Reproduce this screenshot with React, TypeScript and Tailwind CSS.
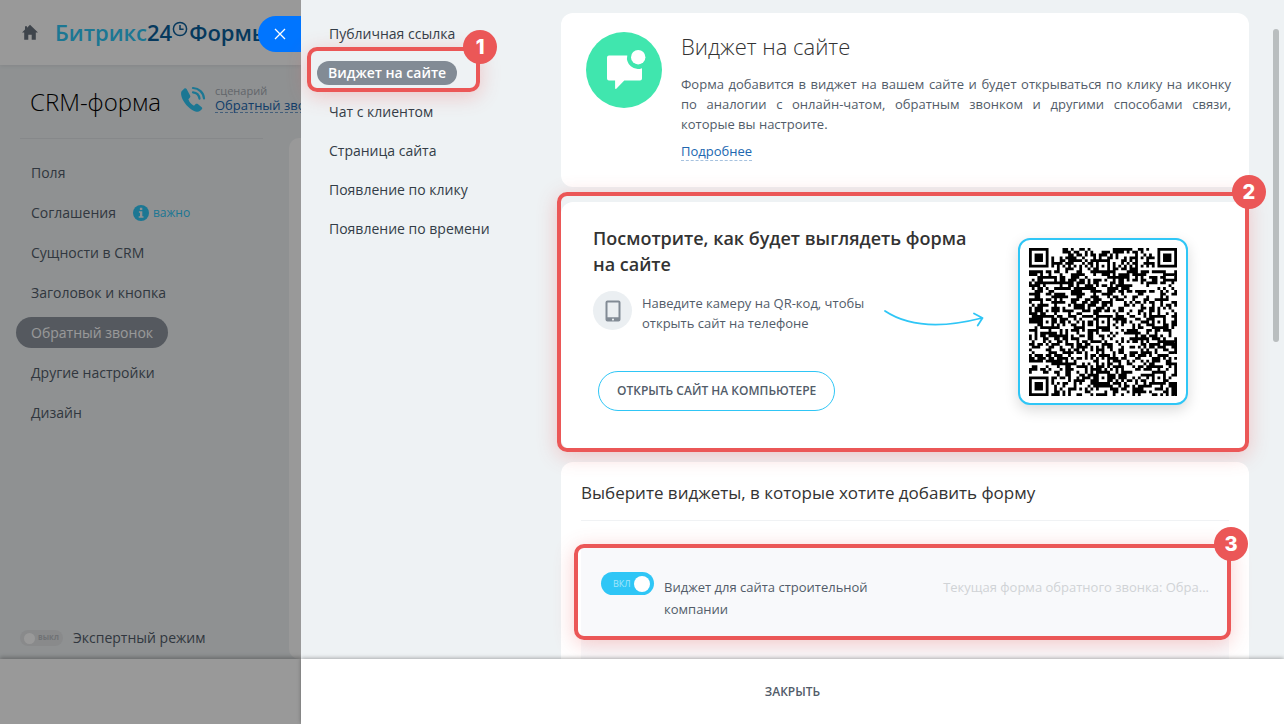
import * as React from 'react';

const FORM_MENU = ['Поля', 'Соглашения', 'Сущности в CRM', 'Заголовок и кнопка', 'Обратный звонок', 'Другие настройки', 'Дизайн']
const PUBLISH_MENU = ['Публичная ссылка', 'Виджет на сайте', 'Чат с клиентом', 'Страница сайта', 'Появление по клику', 'Появление по времени']

const QR_SIZE = 53

function isFrame (dx: number, dy: number, rings: number[]) {
  return rings.includes(Math.max(Math.abs(dx), Math.abs(dy)))
}

// dark modules of the code as one svg path
function qrPath () {
  const finders = [[3, 3], [QR_SIZE - 4, 3], [3, QR_SIZE - 4]]
  const marks = [[26, 6], [6, 26], [26, 26], [46, 26], [26, 46], [46, 46]]
  let seed = 20240
  let path = ''
  for (let y = 0; y < QR_SIZE; y++) {
    for (let x = 0; x < QR_SIZE; x++) {
      seed = (seed * 1103515245 + 12345) % 2147483648
      let dark = (seed >> 16) % 100 < 51
      if (x === 6 || y === 6) dark = (x + y) % 2 === 0
      for (const [cx, cy] of marks) {
        if (Math.abs(x - cx) <= 2 && Math.abs(y - cy) <= 2) dark = isFrame(x - cx, y - cy, [0, 2])
      }
      for (const [cx, cy] of finders) {
        if (Math.abs(x - cx) <= 4 && Math.abs(y - cy) <= 4) dark = isFrame(x - cx, y - cy, [0, 1, 3])
      }
      if (dark) path += `M${x} ${y}h1v1h-1z`
    }
  }
  return path
}

const QR_PATH = qrPath()

function Highlight ({ num, className }: { num: number, className: string }) {
  return (
    <div className={`pointer-events-none absolute z-10 rounded-[10px] border-4 border-[#eb5757] shadow-[0_4px_20px_rgba(235,87,87,0.3)] ${className}`}>
      <span className="absolute -top-[21px] -right-[21px] flex h-[34px] w-[34px] items-center justify-center rounded-full bg-[#eb5757] font-[Inter,sans-serif] text-xl font-extrabold text-white">{num}</span>
    </div>
  )
}

function FormSidebar () {
  return (
    <aside className="relative flex w-[301px] shrink-0 flex-col overflow-hidden bg-[#eef2f4]">
      <header className="flex h-[65px] shrink-0 items-center bg-white pl-[21px] shadow-[0_1px_4px_rgba(0,0,0,0.08)]">
        <svg viewBox="0 0 18 17" className="h-[17px] w-[18px] shrink-0" fill="#6a737f">
          <path d="M9 0.8 17 8.6h-2.2v7.2h-4.1v-5.1H7.3v5.1H3.2V8.6H1L4 5.6V2.2h2v1.5z" />
        </svg>
        <div className="ml-4 flex items-center text-[22px] font-semibold whitespace-nowrap text-[#0b5f9c]">
          <span className="text-[#2fc6f6]">Битрикс</span>24
          <svg viewBox="0 0 16 16" className="mb-2 h-4 w-4" fill="none" stroke="#0b5f9c" strokeWidth="1.5">
            <circle cx="8" cy="8" r="6.6" />
            <path d="M8 4v4.3h3.6" />
          </svg>
          <span className="ml-px">Формы</span>
        </div>
      </header>

      <div className="flex h-[73px] shrink-0 items-center pl-[30px] whitespace-nowrap">
        <h1 className="w-[150px] shrink-0 text-2xl font-light text-black">CRM-форма</h1>
        <svg viewBox="0 0 26 28" className="mb-1 h-7 w-[26px] shrink-0" fill="#2fc6f6">
          <path d="M4.4 2.6 1.6 5.2C.4 7 1.200 12 5 17.200c4 5.300 8.900 8.500 12.800 8.600 1.500 0 2.600-1 4-2.500.6-.7.6-1.300-.1-2l-3.900-3.200c-.7-.6-1.500-.6-2.100 0l-1.700 1.700c-2.700-1.300-4.900-4-5.600-6.500l1.600-1.800c.5-.7.5-1.300.1-2L6.600 3C6 2.100 5.200 1.900 4.400 2.600z" />
          <path d="M13 2c6 .3 10.500 4.500 11 10.500M13 6.400c3.600.3 6 2.700 6.500 6.300" fill="none" stroke="#2fc6f6" strokeWidth="2.200" strokeLinecap="round" />
        </svg>
        <div className="mb-[6px] ml-[9px] flex flex-col items-start">
          <span className="text-[11px] leading-[14px] text-[#a3a9b1]">сценарий</span>
          <a href="#scenario" className="border-b border-dashed border-[#2067b0]/60 text-[13px] leading-[14px] text-[#2067b0]">Обратный звонок</a>
        </div>
      </div>

      <div className="flex flex-1">
        <div className="flex flex-1 flex-col">
          <hr className="ml-5 w-[243px] border-[#dfe3e6]" />
          <nav className="mt-[18px] flex flex-col items-start gap-[9px] pl-4">
            {FORM_MENU.map((item) => (
              <div key={item} className="flex items-center">
                <a
                  href="#form"
                  className={item === 'Обратный звонок'
                    ? 'flex h-[31px] items-center rounded-full bg-[#8e959f] px-[15px] text-sm text-white'
                    : 'flex h-[31px] items-center px-[15px] text-sm text-[#525c69]'}
                >{item}</a>
                {item === 'Соглашения' && (
                  <span className="ml-[2px] flex items-center gap-1 text-xs text-[#2fc6f6]">
                    <svg viewBox="0 0 16 16" className="h-4 w-4">
                      <circle cx="8" cy="8" r="8" fill="#2fc6f6" />
                      <path d="M6.900 2.800h2.400v2.200H6.900zM5.900 6.300h3.400v5h1.200v1.500H5.700v-1.500h1.300V7.800H5.900z" fill="#eef2f4" />
                    </svg>
                    важно
                  </span>
                )}
              </div>
            ))}
          </nav>
          <label className="mt-auto mb-[11px] flex items-center gap-[10px] pl-5 text-sm text-[#525c69]">
            <input type="checkbox" className="sr-only" />
            <span className="flex h-4 w-[43px] items-center gap-[3px] rounded-full bg-[#e4e6e8] pl-1 text-[7px] font-bold text-[#b9bdc2]">
              <span className="h-[11px] w-[11px] rounded-full bg-white" />
              ВЫКЛ
            </span>
            Экспертный режим
          </label>
        </div>
        <div className="w-3 rounded-l-[10px] bg-white" />
      </div>

      <div className="h-[65px] shrink-0 bg-white shadow-[0_-2px_4px_rgba(0,0,0,0.25)]" />

      <div className="absolute inset-0 bg-black/40" />
      <button type="button" aria-label="Закрыть панель" className="absolute top-4 right-0 flex h-9 w-[43px] items-center justify-center rounded-l-full bg-[#0075ff]">
        <svg viewBox="0 0 12 12" className="h-3 w-3" stroke="white" strokeWidth="1.300">
          <path d="M1 1l10 10M11 1 1 11" />
        </svg>
      </button>
    </aside>
  )
}

function PublishMenu () {
  return (
    <nav className="flex w-[260px] shrink-0 flex-col items-start gap-[15px] pt-[22px] pl-4">
      {PUBLISH_MENU.map((item) => item === 'Виджет на сайте'
        ? (
          <div key={item} className="relative">
            <a href="#publish" className="flex h-6 items-center rounded-full bg-[#828b95] px-[11px] text-sm font-semibold text-white">{item}</a>
            <Highlight num={1} className="-top-[14px] -right-[23px] -bottom-[7px] -left-[10px]" />
          </div>
          )
        : <a key={item} href="#publish" className="flex h-6 items-center px-3 text-sm text-[#333d47]">{item}</a>
      )}
    </nav>
  )
}

function AboutCard () {
  return (
    <section className="flex gap-[19px] rounded-xl bg-white pt-[19px] pr-[18px] pb-[25px] pl-[25px]">
      <svg viewBox="0 0 76 76" className="h-[76px] w-[76px] shrink-0">
        <circle cx="38" cy="38" r="38" fill="#40e6ae" />
        <path d="M23 23.500h18.300A11 11 0 0 0 56 36.200V46.500a2 2 0 0 1-2 2H38.300l-8 8.200c-.6.500-1.200.3-1.200-.6v-7.600H23a2 2 0 0 1-2-2V25.500a2 2 0 0 1 2-2z" fill="white" />
        <circle cx="52.200" cy="25.200" r="7.200" fill="white" />
      </svg>
      <div>
        <h2 className="text-[22px] leading-7 font-light text-[#333]">Виджет на сайте</h2>
        <p className="mt-[14px] text-justify text-[13px] leading-5 text-[#525c69]">Форма добавится в виджет на вашем сайте и будет открываться по клику на иконку по аналогии с онлайн-чатом, обратным звонком и другими способами связи, которые вы настроите.</p>
        <a href="#more" className="mt-[9px] inline-block border-b border-dashed border-[#a6c2df] text-[13px] leading-[17px] text-[#2067b0]">Подробнее</a>
      </div>
    </section>
  )
}

function PreviewCard () {
  return (
    <section className="relative mt-[15px] flex rounded-xl bg-white pt-[23px] pr-[61px] pb-[39px] pl-8">
      <Highlight num={2} className="-top-[10px] right-0 -bottom-[2px] -left-1" />
      <div className="w-[390px]">
        <h2 className="text-lg leading-[26px] font-semibold text-[#333]">Посмотрите, как будет выглядеть форма на сайте</h2>
        <div className="mt-[14px] flex items-start gap-[10px]">
          <span className="flex h-[39px] w-[39px] shrink-0 items-center justify-center rounded-full bg-[#ebeff2]">
            <svg viewBox="0 0 16 22" className="h-[22px] w-4">
              <path fillRule="evenodd" d="M2.500.5h11a2 2 0 0 1 2 2v17a2 2 0 0 1-2 2h-11a2 2 0 0 1-2-2v-17a2 2 0 0 1 2-2zM2.500 2.600v14.600h11V2.600zM8 18.500a1 1 0 1 0 .01 0z" fill="#828b95" />
            </svg>
          </span>
          <p className="w-60 pt-[2px] text-[13px] leading-5 text-[#525c69]">Наведите камеру на QR-код, чтобы открыть сайт на телефоне</p>
        </div>
        <button type="button" className="mt-[38px] ml-[5px] h-10 rounded-full border border-[#2fc6f6] px-[18px] text-xs font-semibold text-[#525c69]">ОТКРЫТЬ САЙТ НА КОМПЬЮТЕРЕ</button>
      </div>
      <svg viewBox="0 0 102 22" className="mt-[83px] ml-[-100px] h-[22px] w-[102px] shrink-0" fill="none" stroke="#2fc6f6" strokeWidth="1.800" strokeLinecap="round" strokeLinejoin="round">
        <path d="M2 3C26 19 60 20 99 10M91 5.500l8.500 4.500-4.800 7.500" />
      </svg>
      <div className="mt-[13px] ml-auto flex h-[167px] w-[170px] items-center justify-center rounded-xl border-2 border-[#2fc6f6] bg-white shadow-[0_5px_14px_rgba(0,0,0,0.15)]">
        <svg viewBox="0 0 53 53" className="h-[148px] w-[148px]" role="img" aria-label="QR-код">
          <path d={QR_PATH} fill="black" />
        </svg>
      </div>
    </section>
  )
}

function WidgetsCard () {
  return (
    <section className="mt-[12px] flex-1 rounded-t-xl bg-white px-5 pt-[18px]">
      <h2 className="text-[17px] leading-[26px] text-[#333]">Выберите виджеты, в которые хотите добавить форму</h2>
      <hr className="mt-[14px] border-[#f0f2f4]" />
      <div className="relative mt-[25px] flex bg-[#f8f9fb] px-5 pt-[26px] pb-5">
        <Highlight num={3} className="-top-[2px] -right-[2px] bottom-0 -left-[7px]" />
        <label className="flex w-[300px] gap-[10px] text-[13px] leading-[22px] text-[#525c69]">
          <input type="checkbox" defaultChecked className="sr-only" />
          <span className="flex h-[23px] w-[53px] shrink-0 items-center justify-between rounded-full bg-[#2fc6f6] pr-1 pl-3 text-[9px] text-[#a5e6fb]">
            ВКЛ
            <span className="h-4 w-4 rounded-full bg-white" />
          </span>
          <span className="pt-1">Виджет для сайта строительной компании</span>
        </label>
        <p className="mt-1 ml-auto text-[13px] leading-[22px] whitespace-nowrap text-[#d0d3d6]">Текущая форма обратного звонка: Обра...</p>
      </div>
      <div className="h-10 bg-[#f8f9fb]" />
    </section>
  )
}

export default function App () {
  return (
    <div className="flex h-screen overflow-hidden font-['Open_Sans',sans-serif]">
      <FormSidebar />
      <main className="flex min-w-0 flex-1 flex-col bg-[#eef2f4]">
        <div className="flex min-h-0 flex-1">
          <PublishMenu />
          <div className="flex min-w-0 flex-1 flex-col pt-[13px]">
            <AboutCard />
            <PreviewCard />
            <WidgetsCard />
          </div>
          <div className="w-[35px] shrink-0 pt-[29px] pl-6">
            <div className="h-[313px] w-[6px] rounded-full bg-[#b9bebf]" />
          </div>
        </div>
        <footer className="relative z-20 flex h-[65px] shrink-0 items-center justify-center bg-white shadow-[0_-1px_4px_rgba(0,0,0,0.3)]">
          <button type="button" className="text-xs font-semibold text-[#525c69]">ЗАКРЫТЬ</button>
        </footer>
      </main>
    </div>
  )
}
